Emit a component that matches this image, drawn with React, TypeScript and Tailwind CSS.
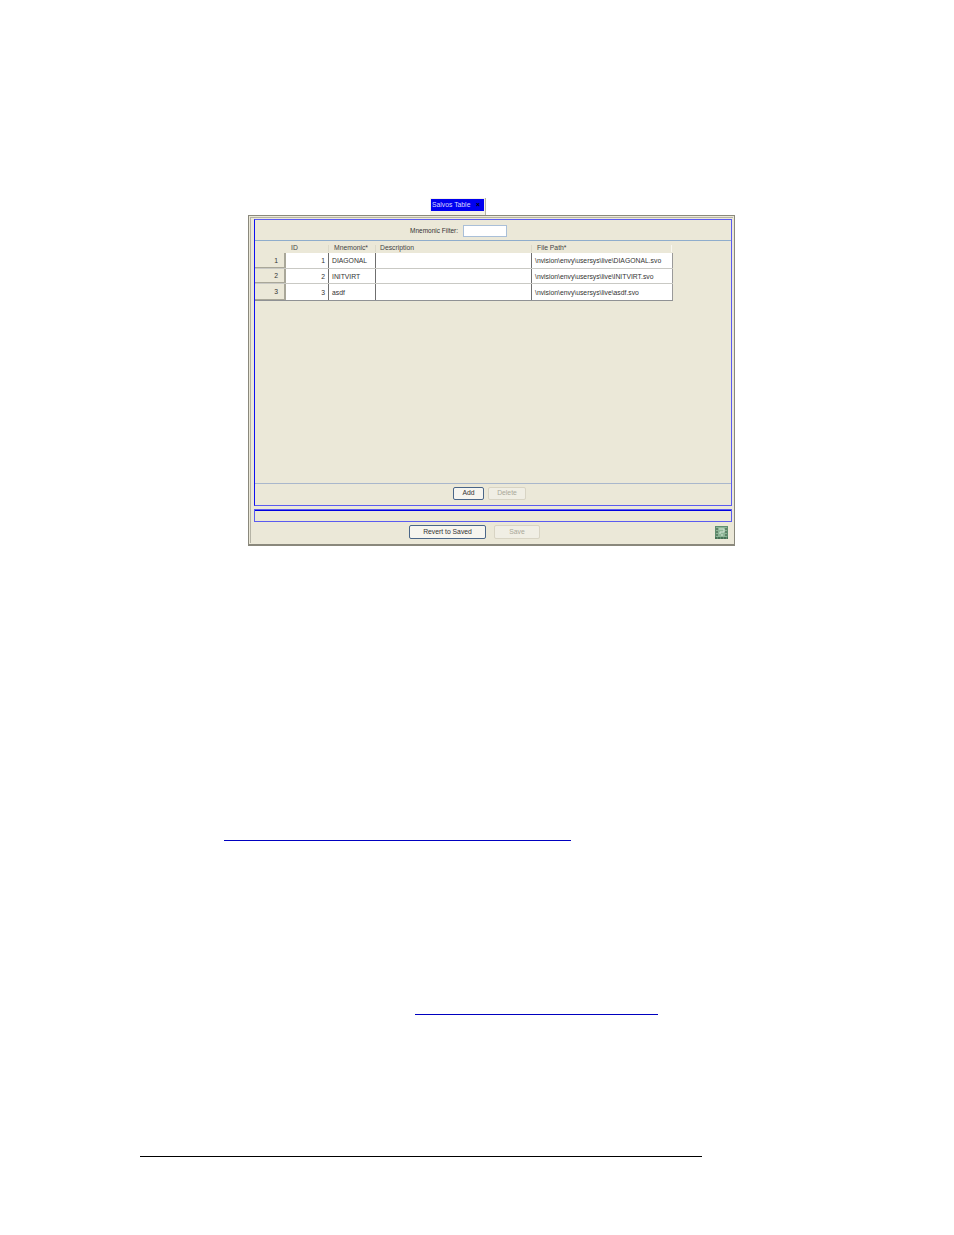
const rows = [
  { n: "1", mnemonic: "DIAGONAL", path: "\\nvision\\envy\\usersys\\live\\DIAGONAL.svo" },
  { n: "2", mnemonic: "INITVIRT", path: "\\nvision\\envy\\usersys\\live\\INITVIRT.svo" },
  { n: "3", mnemonic: "asdf", path: "\\nvision\\envy\\usersys\\live\\asdf.svo" },
];

const Btn = ({ label, size, off }: { label: string; size: string; off?: boolean }) => (
  <div
    className={`${size} flex items-center justify-center rounded-[2px] border text-[6.8px] leading-none ${
      off ? "border-[#d8d4c4] bg-[#f0eee4] text-[#a9a899]" : "border-[#4a6688] bg-[#f6f5ef] text-[#333333]"
    }`}
  >
    {label}
  </div>
);

const App = () => {
  return (
    <div className="relative w-[954px] h-[1235px] bg-white overflow-hidden font-['Liberation_Sans',sans-serif]">
      <div className="pt-[198px] pl-[248px]">
        {/* tab */}
        <div className="ml-[182px] w-[56px] h-[17px] border-r border-[#b8b5a5] bg-[#f3f1e8] pl-[1px] pt-[1px]">
          <div className="w-[53px] h-[12px] bg-[#0000f0] flex items-center justify-between px-[1px] pt-[1px] text-[6.8px] leading-none text-[#d8d8ff]">
            <span>Salvos Table</span>
            <span className="text-black font-bold mr-[3px]">×</span>
          </div>
        </div>

        {/* window */}
        <div className="w-[487px] h-[331px] border border-[#8a887c] border-b-2 bg-[#ebe8d8] p-[1px]">
          <div className="h-full border-l border-t border-[#b5b3a5] pt-[1px] pl-[3px] pr-[1px]">
            <div className="h-[287px] border border-[#5b5bf0] border-l-[#1010f0] flex flex-col">
              <div className="h-[20px] flex items-center gap-[5px] pl-[155px] pt-[2px] text-[6.5px] leading-none text-[#333333]">
                <span>Mnemonic Filter:</span>
                <div className="w-[44px] h-[12px] bg-white border border-[#a9bfd8]" />
              </div>
              <div className="border-t border-[#8fadcc]">
                <div className="flex h-[12px] items-center pt-[3px] text-[6.8px] leading-none text-[#444444]">
                  <div className="w-[31px]" />
                  <div className="w-[43px] pl-[5px] border-r border-[#dcd9c9]">ID</div>
                  <div className="w-[47px] pl-[5px] border-r border-[#dcd9c9]">Mnemonic*</div>
                  <div className="w-[156px] pl-[4px] border-r border-[#dcd9c9]">Description</div>
                  <div className="w-[140px] pl-[5px] border-r border-[#f8f7f0]">File Path*</div>
                </div>
                <div className="w-[418px] border-b border-[#8f9194]">
                  {rows.map((r) => (
                    <div key={r.n} className="flex h-[15.5px] text-[6.8px] leading-none text-[#333333] border-b border-[#c9c9c4] last:border-b-0">
                      <div className="w-[31px] flex items-center justify-end pr-[6px] pt-[3px] bg-[#ebe8d8] border-r-2 border-b border-[#a9a799]">{r.n}</div>
                      <div className="w-[43px] flex items-center justify-end pt-[3px] pr-[3px] bg-white border-r border-[#6f6f6f]">{r.n}</div>
                      <div className="w-[47px] flex items-center pt-[3px] pl-[3px] bg-white border-r border-[#6f6f6f]">{r.mnemonic}</div>
                      <div className="w-[156px] bg-white border-r border-[#6f6f6f]" />
                      <div className="w-[141px] flex items-center pt-[3px] pl-[3px] bg-white border-r border-[#9a9a9a]">{r.path}</div>
                    </div>
                  ))}
                </div>
              </div>
              <div className="flex-1" />
              <div className="h-[22px] border-t border-[#a9b7cc] flex items-start gap-[4px] pt-[3px] pl-[198px]">
                <Btn label="Add" size="w-[31px] h-[13px]" />
                <Btn label="Delete" size="w-[38px] h-[13px]" off />
              </div>
            </div>

            <div className="h-[13px] mt-[3px] border border-[#5b5bf0] shadow-[inset_0_1px_0_#0000e0]" />

            <div className="relative h-[14px] mt-[3px] flex gap-[8px] pl-[155px]">
              <Btn label="Revert to Saved" size="w-[77px] h-[14px]" />
              <Btn label="Save" size="w-[46px] h-[14px]" off />
              {/* status icon */}
              <svg className="absolute left-[461px] top-[1px]" width="13" height="13" viewBox="0 0 13 13">
                <rect width="13" height="13" fill="#5f8f70" />
                <rect x="1" y="1" width="11" height="10" fill="#8db596" />
                <path d="M4 3h5M9 3v3M5 6h4M5 6v2M7 8v2" stroke="#d4e6d6" strokeWidth="1" fill="none" />
                <path d="M0 12h13M2 2v8M11 2v8" stroke="#33523c" strokeWidth="1" strokeDasharray="2 1" />
              </svg>
            </div>
          </div>
        </div>
      </div>

      {/* link underlines */}
      <div className="mt-[294px] ml-[224px] w-[347px] h-px bg-[#0000c0]" />
      <div className="mt-[173px] ml-[415px] w-[243px] h-px bg-[#0000c0]" />
      {/* footer rule */}
      <div className="mt-[141px] ml-[140px] w-[562px] h-px bg-black" />
    </div>
  );
};

export default App;
